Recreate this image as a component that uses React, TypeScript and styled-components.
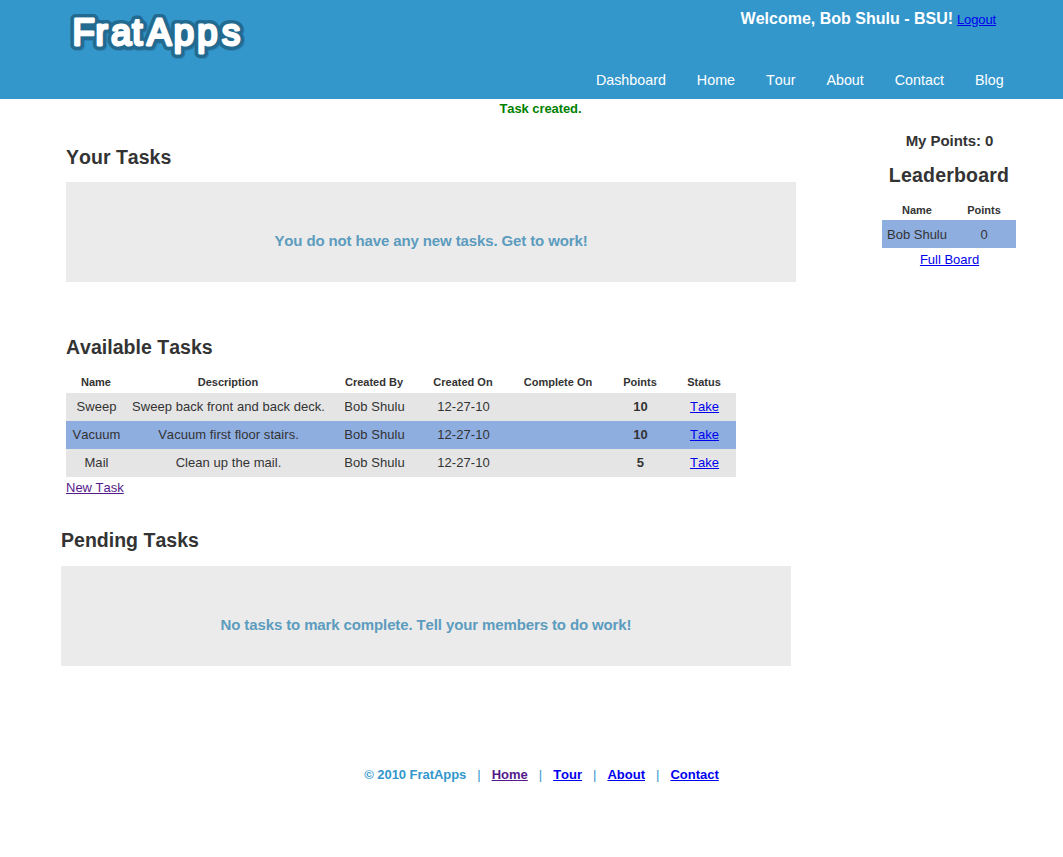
import React from "react";
import styled, { createGlobalStyle } from "styled-components";

const GlobalStyle = createGlobalStyle`
  body {
    margin: 0;
    background: #fff;
    color: #333;
    font: 13px/15px "Liberation Sans", Arial, sans-serif;
    font-kerning: none;
  }
  h1, h2, h3, p { margin: 0; }
`;

const Header = styled.header`
  display: flex;
  justify-content: space-between;
  height: 99px;
  padding: 0 60px 0 66px;
  box-sizing: border-box;
  background: #3397cc;
`;

const Logo = styled.svg`
  display: block;
  margin-top: 8px;
  font-family: "Liberation Sans", Arial, sans-serif;
  font-size: 36.5px;
`;

const HeaderRight = styled.div`
  display: flex;
  flex-direction: column;
  justify-content: space-between;
  align-items: flex-end;
  padding: 10px 0 10px;
`;

const Account = styled.div`
  display: flex;
  align-items: baseline;
  gap: 4px;
  padding-right: 7px;
`;

const Welcome = styled.h3`
  color: #fff;
  font-size: 16px;
  line-height: 18px;
`;

const Nav = styled.nav`
  display: flex;
  gap: 31px;
  margin-right: -0.7px;
`;

const NavLink = styled.a`
  color: #fff;
  font-size: 14.3px;
  line-height: 17px;
  text-decoration: none;
`;

const Link = styled.a<{ $visited?: boolean }>`
  color: ${(p) => (p.$visited ? "#551a8b" : "#0000ee")};
  text-decoration: underline;
`;

const LogoutLink = styled(Link)`
  letter-spacing: -0.13px;
`;

const Flash = styled.p`
  padding: 2px 0 0 18px;
  color: green;
  font-weight: bold;
  letter-spacing: -0.08px;
  text-align: center;
`;

const Content = styled.div`
  display: flex;
  justify-content: space-between;
  padding: 0 47px 0 61px;
`;

const Main = styled.main`
  width: 735px;
`;

const Section = styled.section<{ $top: number; $indent?: number }>`
  padding: ${(p) => p.$top}px 0 0 ${(p) => p.$indent ?? 0}px;
`;

const Title = styled.h2<{ $spacing?: number }>`
  font-size: 19.5px;
  letter-spacing: ${(p) => p.$spacing ?? 0.02}px;
  line-height: 22px;
`;

const EmptyPanel = styled.div<{ $gap: number }>`
  width: 730px;
  height: 100px;
  margin-top: ${(p) => p.$gap}px;
  padding-top: 50px;
  box-sizing: border-box;
  background: #ebebeb;
  color: #5c9cbe;
  font-size: 15px;
  font-weight: bold;
  letter-spacing: -0.12px;
  line-height: 17px;
  text-align: center;
`;

const Table = styled.table<{ $width: number }>`
  width: ${(p) => p.$width}px;
  table-layout: fixed;
  border-collapse: collapse;
  text-align: center;
`;

const HeadCell = styled.th<{ $width: number; $drop?: number }>`
  width: ${(p) => p.$width}px;
  height: 21px;
  box-sizing: border-box;
  padding: ${(p) => p.$drop ?? 0}px 0 0;
  font-size: 11px;
  white-space: nowrap;
`;

const Row = styled.tr<{ $blue?: boolean }>`
  height: 28px;
  background: ${(p) => (p.$blue ? "#8faee0" : "#e5e5e5")};
`;

const Cell = styled.td<{ $bold?: boolean }>`
  padding: 0;
  font-weight: ${(p) => (p.$bold ? "bold" : "normal")};
  white-space: nowrap;
`;

const TaskCell = styled(Cell)`
  padding: 0 0 2px 1px;
  letter-spacing: 0.05px;
`;

const TaskTable = styled.div`
  padding: 14px 0 3px;
`;

const Sidebar = styled.aside`
  display: flex;
  flex-direction: column;
  align-items: center;
  width: 134px;
  padding-top: 16px;
`;

const Points = styled.h3`
  font-size: 15px;
  letter-spacing: -0.05px;
  line-height: 17px;
  padding: 0 0 15px 1px;
`;

const Board = styled.div`
  padding: 13px 0 4px;
`;

const BoardLink = styled(Link)`
  padding-left: 1px;
`;

const Footer = styled.footer`
  display: flex;
  justify-content: center;
  gap: 11px;
  padding: 101px 0 0 20px;
  color: #3397cc;
  font-weight: bold;
`;

const Copyright = styled.span`
  letter-spacing: -0.05px;
`;

const Divider = styled.span`
  font-weight: normal;
`;

const columns: [string, number][] = [
  ["Name", 60],
  ["Description", 204],
  ["Created By", 88],
  ["Created On", 90],
  ["Complete On", 100],
  ["Points", 64],
  ["Status", 64],
];

const tasks = [
  { name: "Sweep", description: "Sweep back front and back deck.", points: 10 },
  { name: "Vacuum", description: "Vacuum first floor stairs.", points: 10 },
  { name: "Mail", description: "Clean up the mail.", points: 5 },
];

const navItems = ["Dashboard", "Home", "Tour", "About", "Contact", "Blog"];
const footerItems = ["Home", "Tour", "About", "Contact"];

function Brand() {
  const text = {
    x: "6.4 29.5 44.9 66.3 81 107.8 131.2 156",
    y: 36.8,
    strokeLinejoin: "round" as const,
  };
  return (
    <Logo width="184" height="56" viewBox="0 0 184 56">
      <g transform="translate(1 1.5)">
        <text {...text} fill="none" stroke="#1d5777" strokeOpacity="0.3" strokeWidth="10">FratApps</text>
      </g>
      <text {...text} fill="#236a90" stroke="#236a90" strokeWidth="10">FratApps</text>
      <text {...text} fill="#fff" stroke="#fff" strokeWidth="2.8">FratApps</text>
    </Logo>
  );
}

export default function App() {
  return (
    <>
      <GlobalStyle />
      <Header>
        <Brand />
        <HeaderRight>
          <Account>
            <Welcome>Welcome, Bob Shulu - BSU!</Welcome>
            <LogoutLink href="#">Logout</LogoutLink>
          </Account>
          <Nav>
            {navItems.map((item) => (
              <NavLink href="#" key={item}>{item}</NavLink>
            ))}
          </Nav>
        </HeaderRight>
      </Header>
      <Flash>Task created.</Flash>
      <Content>
        <Main>
          <Section $top={30} $indent={5}>
            <Title>Your Tasks</Title>
            <EmptyPanel $gap={14}>You do not have any new tasks. Get to work!</EmptyPanel>
          </Section>
          <Section $top={54} $indent={5}>
            <Title>Available Tasks</Title>
            <TaskTable>
              <Table $width={670}>
                <thead>
                  <tr>
                    {columns.map(([label, width]) => (
                      <HeadCell key={label} $width={width}>{label}</HeadCell>
                    ))}
                  </tr>
                </thead>
                <tbody>
                  {tasks.map((task, i) => (
                    <Row key={task.name} $blue={i % 2 === 1}>
                      <TaskCell>{task.name}</TaskCell>
                      <TaskCell>{task.description}</TaskCell>
                      <TaskCell>Bob Shulu</TaskCell>
                      <TaskCell>12-27-10</TaskCell>
                      <TaskCell />
                      <TaskCell $bold>{task.points}</TaskCell>
                      <TaskCell><Link href="#">Take</Link></TaskCell>
                    </Row>
                  ))}
                </tbody>
              </Table>
            </TaskTable>
            <Link href="#" $visited>New Task</Link>
          </Section>
          <Section $top={34}>
            <Title>Pending Tasks</Title>
            <EmptyPanel $gap={15}>No tasks to mark complete. Tell your members to do work!</EmptyPanel>
          </Section>
        </Main>
        <Sidebar>
          <Points>My Points: 0</Points>
          <Title $spacing={0.2}>Leaderboard</Title>
          <Board>
            <Table $width={134}>
              <thead>
                <tr>
                  <HeadCell $width={70} $drop={2}>Name</HeadCell>
                  <HeadCell $width={64} $drop={2}>Points</HeadCell>
                </tr>
              </thead>
              <tbody>
                <Row $blue>
                  <Cell>Bob Shulu</Cell>
                  <Cell>0</Cell>
                </Row>
              </tbody>
            </Table>
          </Board>
          <BoardLink href="#">Full Board</BoardLink>
        </Sidebar>
      </Content>
      <Footer>
        <Copyright>© 2010 FratApps</Copyright>
        {footerItems.map((item) => (
          <React.Fragment key={item}>
            <Divider>|</Divider>
            <Link href="#" $visited={item === "Home"}>{item}</Link>
          </React.Fragment>
        ))}
      </Footer>
    </>
  );
}
